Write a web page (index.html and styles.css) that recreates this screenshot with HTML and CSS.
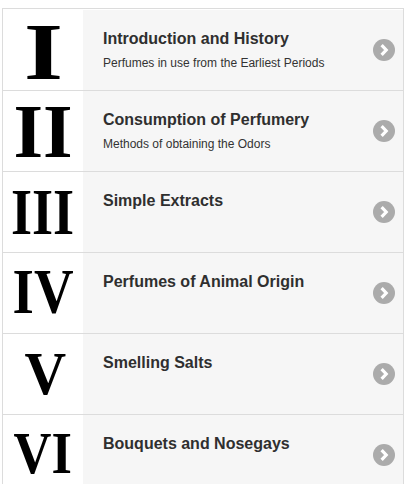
FILE: index.html
```html
<!DOCTYPE html>
<html lang="en">
<head>
<meta charset="utf-8">
<title>Perfumes</title>
<link rel="stylesheet" href="styles.css">
</head>
<body>
<ul class="list">
  <li class="item">
    <div class="thumb"><span class="num num-1">I</span></div>
    <div class="body">
      <h2 class="title">Introduction and History</h2>
      <p class="sub">Perfumes in use from the Earliest Periods</p>
    </div>
    <span class="arrow"><svg viewBox="0 0 22 22" width="22" height="22"><circle cx="11" cy="11" r="11" fill="#ababab"/><path d="M8.6 6.2 L13.2 11 L8.6 15.8" fill="none" stroke="#fff" stroke-width="3.2"/></svg></span>
  </li>
  <li class="item">
    <div class="thumb"><span class="num num-2">II</span></div>
    <div class="body">
      <h2 class="title">Consumption of Perfumery</h2>
      <p class="sub">Methods of obtaining the Odors</p>
    </div>
    <span class="arrow"><svg viewBox="0 0 22 22" width="22" height="22"><circle cx="11" cy="11" r="11" fill="#ababab"/><path d="M8.6 6.2 L13.2 11 L8.6 15.8" fill="none" stroke="#fff" stroke-width="3.2"/></svg></span>
  </li>
  <li class="item">
    <div class="thumb"><span class="num num-3">III</span></div>
    <div class="body">
      <h2 class="title">Simple Extracts</h2>
    </div>
    <span class="arrow"><svg viewBox="0 0 22 22" width="22" height="22"><circle cx="11" cy="11" r="11" fill="#ababab"/><path d="M8.6 6.2 L13.2 11 L8.6 15.8" fill="none" stroke="#fff" stroke-width="3.2"/></svg></span>
  </li>
  <li class="item">
    <div class="thumb"><span class="num num-4">IV</span></div>
    <div class="body">
      <h2 class="title">Perfumes of Animal Origin</h2>
    </div>
    <span class="arrow"><svg viewBox="0 0 22 22" width="22" height="22"><circle cx="11" cy="11" r="11" fill="#ababab"/><path d="M8.6 6.2 L13.2 11 L8.6 15.8" fill="none" stroke="#fff" stroke-width="3.2"/></svg></span>
  </li>
  <li class="item">
    <div class="thumb"><span class="num num-5">V</span></div>
    <div class="body">
      <h2 class="title">Smelling Salts</h2>
    </div>
    <span class="arrow"><svg viewBox="0 0 22 22" width="22" height="22"><circle cx="11" cy="11" r="11" fill="#ababab"/><path d="M8.6 6.2 L13.2 11 L8.6 15.8" fill="none" stroke="#fff" stroke-width="3.2"/></svg></span>
  </li>
  <li class="item">
    <div class="thumb"><span class="num num-6">VI</span></div>
    <div class="body">
      <h2 class="title">Bouquets and Nosegays</h2>
    </div>
    <span class="arrow"><svg viewBox="0 0 22 22" width="22" height="22"><circle cx="11" cy="11" r="11" fill="#ababab"/><path d="M8.6 6.2 L13.2 11 L8.6 15.8" fill="none" stroke="#fff" stroke-width="3.2"/></svg></span>
  </li>
</ul>
</body>
</html>
```
FILE: styles.css
```css
html, body {
  margin: 0;
  padding: 0;
  background: #fff;
}
body {
  font-family: "Liberation Sans", Arial, sans-serif;
  color: #333;
  overflow: hidden;
}
.list {
  list-style: none;
  margin: 8px 3px 0 2px;
  padding: 1px 0 0 0;
  border: 1px solid #dcdcdc;
  border-bottom: none;
}
.item {
  display: flex;
  align-items: stretch;
  height: 80px;
  border-top: 1px solid #dcdcdc;
  background: #f6f6f6;
}
.item:first-child {
  border-top: none;
}
.thumb {
  width: 80px;
  flex: 0 0 80px;
  background: #fff;
  display: flex;
  align-items: center;
  justify-content: center;
}
.num {
  font-family: "Liberation Serif", "Times New Roman", serif;
  font-weight: bold;
  color: #000;
  line-height: 0.8;
  display: inline-block;
}
.num-1 { font-size: 80px; transform: scaleX(1.25); margin-top: 3px; margin-left: 2px; }
.num-2 { font-size: 76px; transform: scaleX(1); }
.num-3 { font-size: 66px; transform: scaleX(0.82); }
.num-4 { font-size: 63px; transform: scaleX(0.87); margin-top: -1px; }
.num-5 { font-size: 62px; transform: scaleX(0.93); margin-left: 4px; }
.num-6 { font-size: 59px; transform: scaleX(0.89); margin-top: -2px; }
.body {
  flex: 1 1 auto;
  padding: 19px 0 0 20px;
  min-width: 0;
}
.title {
  margin: 0;
  font-size: 16px;
  line-height: 19px;
  font-weight: bold;
  color: #2f2f2f;
}
.sub {
  margin: 8px 0 0 0;
  font-size: 12px;
  line-height: 15px;
  color: #333;
}
.arrow {
  flex: 0 0 auto;
  align-self: center;
  width: 22px;
  height: 22px;
  margin-right: 8px;
  display: block;
}
.arrow svg {
  display: block;
}
```
